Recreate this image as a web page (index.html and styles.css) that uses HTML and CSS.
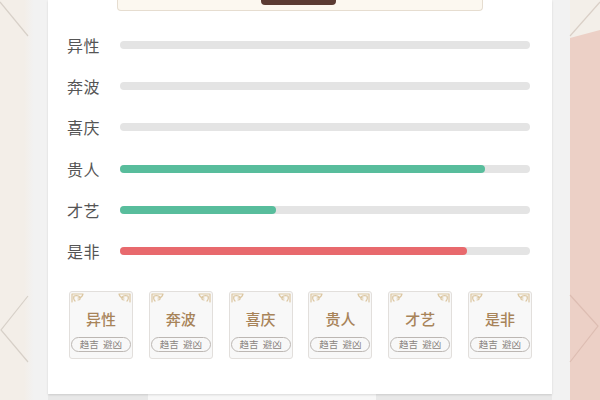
FILE: index.html
```html
<!DOCTYPE html>
<html lang="zh">
<head>
<meta charset="utf-8">
<link rel="stylesheet" href="styles.css">
</head>
<body>
<div class="page">
  <svg class="deco" width="600" height="400" viewBox="0 0 600 400">
    <polygon points="570,38 600,30 600,400 570,400" fill="#ecd0c6"/>
    <polyline points="0,2 28,36" fill="none" stroke="#d7d0c8" stroke-width="1.2"/>
    <polyline points="28,296 1,330 28,362" fill="none" stroke="#d7d0c8" stroke-width="1.2"/>
    <polyline points="600,2 570,36" fill="none" stroke="#d9cfc6" stroke-width="1.2"/>
    <polyline points="570,295 598,326 570,362" fill="none" stroke="#ddbdb2" stroke-width="1.2"/>
  </svg>
  <div class="side side-left"></div>
  <main class="card">
    <div class="topbox"><div class="toptab"></div></div>
    <ul class="rows">
      <li class="row"><span class="label">异性</span><span class="track"></span></li>
      <li class="row"><span class="label">奔波</span><span class="track"></span></li>
      <li class="row"><span class="label">喜庆</span><span class="track"></span></li>
      <li class="row"><span class="label">贵人</span><span class="track"><span class="fill green" style="width:89%"></span></span></li>
      <li class="row"><span class="label">才艺</span><span class="track"><span class="fill green" style="width:38%"></span></span></li>
      <li class="row"><span class="label">是非</span><span class="track"><span class="fill red" style="width:84.6%"></span></span></li>
    </ul>
    <div class="tiles">
      <div class="tile"><svg class="orn" width="64" height="14" viewBox="0 0 64 14"><path d="M3 3 H14 M3 3 V11 M5 5 q4 -1 6 1 q1 3 -2 3 M14 3 q-1 4 -5 4 M5 5 q-1 3 1 5" /><path d="M61 3 H50 M61 3 V11 M59 5 q-4 -1 -6 1 q-1 3 2 3 M50 3 q1 4 5 4 M59 5 q1 3 -1 5" /></svg><div class="tname">异性</div><div class="pill">趋吉&nbsp;&nbsp;避凶</div></div>
      <div class="tile"><svg class="orn" width="64" height="14" viewBox="0 0 64 14"><path d="M3 3 H14 M3 3 V11 M5 5 q4 -1 6 1 q1 3 -2 3 M14 3 q-1 4 -5 4 M5 5 q-1 3 1 5" /><path d="M61 3 H50 M61 3 V11 M59 5 q-4 -1 -6 1 q-1 3 2 3 M50 3 q1 4 5 4 M59 5 q1 3 -1 5" /></svg><div class="tname">奔波</div><div class="pill">趋吉&nbsp;&nbsp;避凶</div></div>
      <div class="tile"><svg class="orn" width="64" height="14" viewBox="0 0 64 14"><path d="M3 3 H14 M3 3 V11 M5 5 q4 -1 6 1 q1 3 -2 3 M14 3 q-1 4 -5 4 M5 5 q-1 3 1 5" /><path d="M61 3 H50 M61 3 V11 M59 5 q-4 -1 -6 1 q-1 3 2 3 M50 3 q1 4 5 4 M59 5 q1 3 -1 5" /></svg><div class="tname">喜庆</div><div class="pill">趋吉&nbsp;&nbsp;避凶</div></div>
      <div class="tile"><svg class="orn" width="64" height="14" viewBox="0 0 64 14"><path d="M3 3 H14 M3 3 V11 M5 5 q4 -1 6 1 q1 3 -2 3 M14 3 q-1 4 -5 4 M5 5 q-1 3 1 5" /><path d="M61 3 H50 M61 3 V11 M59 5 q-4 -1 -6 1 q-1 3 2 3 M50 3 q1 4 5 4 M59 5 q1 3 -1 5" /></svg><div class="tname">贵人</div><div class="pill">趋吉&nbsp;&nbsp;避凶</div></div>
      <div class="tile"><svg class="orn" width="64" height="14" viewBox="0 0 64 14"><path d="M3 3 H14 M3 3 V11 M5 5 q4 -1 6 1 q1 3 -2 3 M14 3 q-1 4 -5 4 M5 5 q-1 3 1 5" /><path d="M61 3 H50 M61 3 V11 M59 5 q-4 -1 -6 1 q-1 3 2 3 M50 3 q1 4 5 4 M59 5 q1 3 -1 5" /></svg><div class="tname">才艺</div><div class="pill">趋吉&nbsp;&nbsp;避凶</div></div>
      <div class="tile"><svg class="orn" width="64" height="14" viewBox="0 0 64 14"><path d="M3 3 H14 M3 3 V11 M5 5 q4 -1 6 1 q1 3 -2 3 M14 3 q-1 4 -5 4 M5 5 q-1 3 1 5" /><path d="M61 3 H50 M61 3 V11 M59 5 q-4 -1 -6 1 q-1 3 2 3 M50 3 q1 4 5 4 M59 5 q1 3 -1 5" /></svg><div class="tname">是非</div><div class="pill">趋吉&nbsp;&nbsp;避凶</div></div>
    </div>
  </main>
  <div class="side side-right"></div>
  <div class="bottom"><span class="bottom-light"></span></div>
</div>
</body>
</html>
```
FILE: styles.css
```css
* { box-sizing: border-box; }
html, body { margin: 0; padding: 0; }
body {
  width: 600px;
  height: 400px;
  overflow: hidden;
  font-family: "Noto Sans CJK SC", "Noto Sans", sans-serif;
  background: #f2f2f2;
}
.page {
  position: relative;
  width: 600px;
  height: 400px;
  display: grid;
  grid-template-columns: 48px 504px 48px;
  grid-template-rows: 394px 6px;
  background: linear-gradient(to right, #f3eee8 0, #f3eee8 24px, #f2f2f2 34px, #f2f2f2 570px, #f3efe9 570px);
}
.deco {
  position: absolute;
  left: 0;
  top: 0;
  pointer-events: none;
}
.side { position: relative; }
.card {
  position: relative;
  background: #ffffff;
  box-shadow: 0 1px 2px rgba(0,0,0,0.12);
  padding: 0 22px 0 19px;
  display: flex;
  flex-direction: column;
}
.topbox {
  margin: 0 47px 0 50px;
  height: 11px;
  background: #fcf8f0;
  border: 1px solid #e6ddd0;
  border-top: none;
  border-radius: 0 0 4px 4px;
  display: flex;
  justify-content: center;
}
.toptab {
  width: 75px;
  height: 5px;
  background: #5b3b33;
  border-radius: 0 0 4px 4px;
  margin-left: -4px;
}
.rows {
  list-style: none;
  margin: 13px 0 0 0;
  padding: 0;
}
.row {
  height: 41.3px;
  display: flex;
  align-items: center;
}
.label {
  width: 53px;
  font-size: 16px;
  color: #555555;
  letter-spacing: 0.5px;
  line-height: 20px;
}
.track {
  flex: 1;
  height: 8px;
  border-radius: 4px;
  background: #e4e4e4;
  display: flex;
}
.fill {
  height: 8px;
  border-radius: 4px;
}
.fill.green { background: #58bd9c; }
.fill.red { background: #e8696d; }
.tiles {
  margin: 19px 0 0 2px;
  display: grid;
  grid-template-columns: repeat(6, 64px);
  column-gap: 15.8px;
}
.tile {
  position: relative;
  height: 68px;
  background: #f8f8f8;
  border: 1px solid #e2dfdc;
  border-radius: 3px;
  display: flex;
  flex-direction: column;
  align-items: center;
}
.orn {
  position: absolute;
  left: -1px;
  top: -1px;
}
.orn path {
  fill: none;
  stroke: #dcc7a2;
  stroke-width: 1.2;
  stroke-linecap: round;
}
.tname {
  margin-top: 17px;
  font-size: 15px;
  line-height: 20px;
  color: #a8845a;
  font-weight: 500;
}
.pill {
  margin-top: 8px;
  width: 60px;
  height: 15px;
  border: 1px solid #bcb7b3;
  border-radius: 8px;
  font-size: 9.5px;
  line-height: 13px;
  color: #8a8480;
  text-align: center;
}
.bottom {
  grid-column: 2;
  background: #e8e8e8;
  display: flex;
  padding-left: 100px;
}
.bottom-light {
  width: 228px;
  background: #f7f7f7;
}
```
